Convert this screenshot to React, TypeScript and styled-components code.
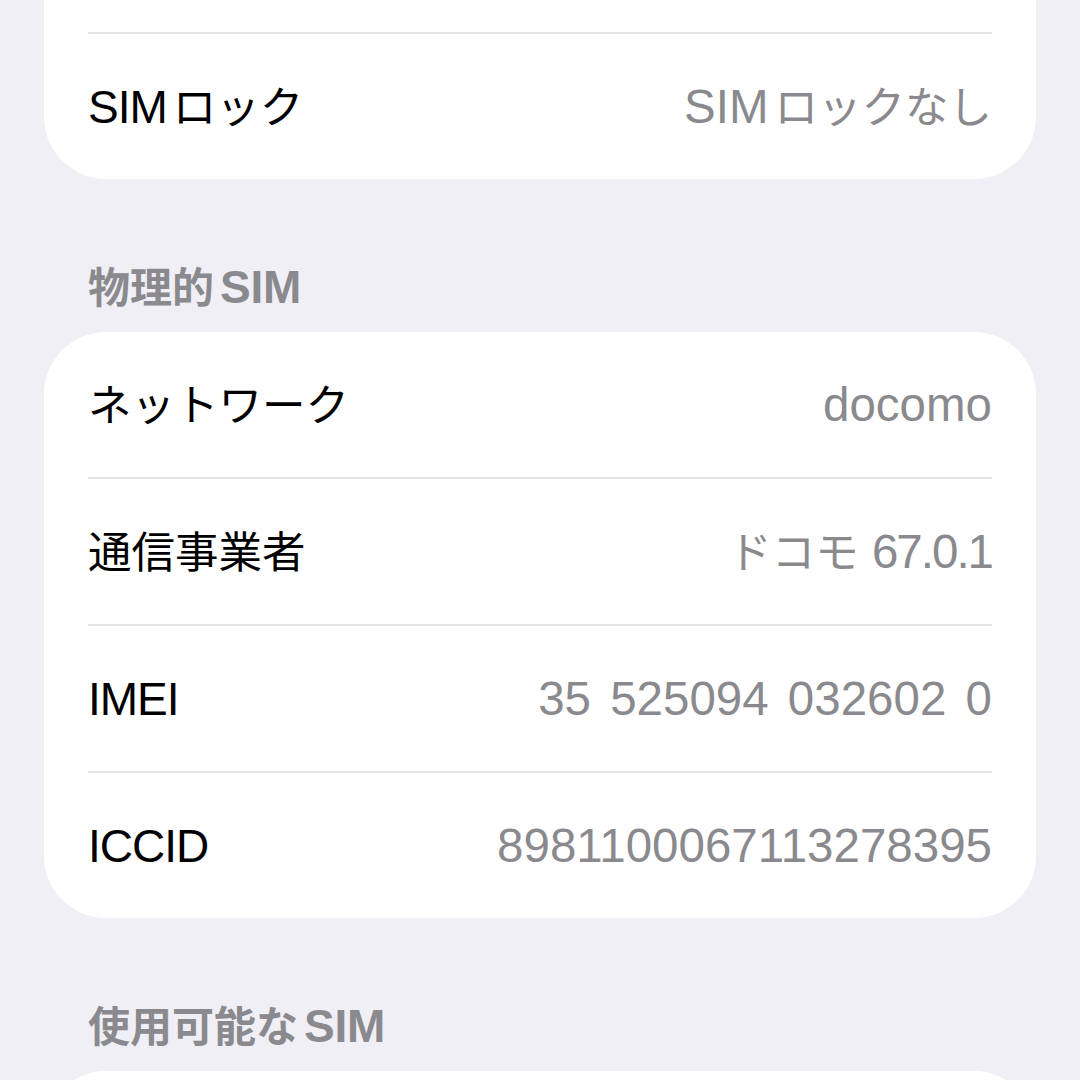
import React from "react";
import styled, { createGlobalStyle } from "styled-components";

const Global = createGlobalStyle`
  html, body {
    margin: 0;
    padding: 0;
    background: #f0eff5;
  }
  body {
    font-family: "Liberation Sans", "Noto Sans CJK JP", sans-serif;
    -webkit-font-smoothing: antialiased;
  }
`;

const Screen = styled.div`
  width: 1080px;
  height: 1080px;
  overflow: hidden;
  background: #f0eff5;
  display: flex;
  flex-direction: column;
`;

const Card = styled.div<{ $offset?: number }>`
  margin: ${(p) => (p.$offset ? `-${p.$offset}px` : "0")} 44px 0 44px;
  background: #ffffff;
  border-radius: 62px;
  display: flex;
  flex-direction: column;
  flex-shrink: 0;
`;

const Row = styled.div`
  height: 145px;
  padding: 0 44px;
  display: flex;
  align-items: center;
  justify-content: space-between;
  line-height: 1;
`;

const Label = styled.span`
  color: #000000;
  font-size: 46px;
  letter-spacing: -1px;
  white-space: nowrap;
`;

const Value = styled.span<{ $tight?: boolean }>`
  color: #8a8a8e;
  font-size: 47.5px;
  letter-spacing: ${(p) => (p.$tight ? "-2px" : "0")};
  word-spacing: ${(p) => (p.$tight ? "2px" : "6px")};
  white-space: nowrap;
`;

const Jp = styled.span<{ $lead?: boolean; $trail?: boolean }>`
  font-family: "Noto Sans CJK JP", sans-serif;
  font-size: 43.5px;
  letter-spacing: 0;
  line-height: 1;
  margin-left: ${(p) => (p.$lead ? "6px" : "0")};
  margin-right: ${(p) => (p.$trail ? "6px" : "0")};
`;

const HeaderJp = styled(Jp)`
  font-size: 42px;
  font-weight: 700;
`;

const Separator = styled.div`
  height: 2px;
  margin: 0 44px;
  background: #e3e3e8;
`;

const Header = styled.div`
  padding: 82px 88px 19px 88px;
  height: 52px;
  line-height: 52px;
  font-size: 46px;
  font-weight: 700;
  color: #8a8a8e;
  letter-spacing: -0.3px;
  flex-shrink: 0;
  white-space: nowrap;
`;

const cjk = /[\u3000-\u30ff\u4e00-\u9fff\uff00-\uffef]/;

function Mixed({ text, header }: { text: string; header?: boolean }) {
  const runs: { s: string; jp: boolean }[] = [];
  for (const ch of text) {
    const jp = cjk.test(ch);
    const last = runs[runs.length - 1];
    if (last && last.jp === jp) last.s += ch;
    else runs.push({ s: ch, jp });
  }
  const J = header ? HeaderJp : Jp;
  return (
    <>
      {runs.map((r, i) => {
        if (!r.jp) return <React.Fragment key={i}>{r.s}</React.Fragment>;
        const prev = runs[i - 1];
        const next = runs[i + 1];
        const lead = !!prev && !/\s$/.test(prev.s);
        const trail = !!next && !/^\s/.test(next.s);
        return (
          <J key={i} $lead={lead} $trail={trail}>
            {r.s}
          </J>
        );
      })}
    </>
  );
}

type Item = { label: string; value: string; tight?: boolean };

const physical: Item[] = [
  { label: "ネットワーク", value: "docomo" },
  { label: "通信事業者", value: "ドコモ 67.0.1", tight: true },
  { label: "IMEI", value: "35 525094 032602 0" },
  { label: "ICCID", value: "89811000671132783" + "95" },
];

const Rows = ({ items }: { items: Item[] }) => (
  <>
    {items.map((it, i) => (
      <React.Fragment key={it.label + i}>
        {i > 0 && <Separator />}
        <Row>
          <Label>
            <Mixed text={it.label} />
          </Label>
          <Value $tight={it.tight}>
            <Mixed text={it.value} />
          </Value>
        </Row>
      </React.Fragment>
    ))}
  </>
);

export default function App() {
  return (
    <>
      <Global />
      <Screen>
        <Card $offset={113}>
          <Rows
            items={[
              { label: "", value: "" },
              { label: "SIMロック", value: "SIMロックなし" },
            ]}
          />
        </Card>
        <Header>
          <Mixed text="物理的SIM" header />
        </Header>
        <Card>
          <Rows items={physical} />
        </Card>
        <Header>
          <Mixed text="使用可能なSIM" header />
        </Header>
        <Card>
          <Row />
        </Card>
      </Screen>
    </>
  );
}
